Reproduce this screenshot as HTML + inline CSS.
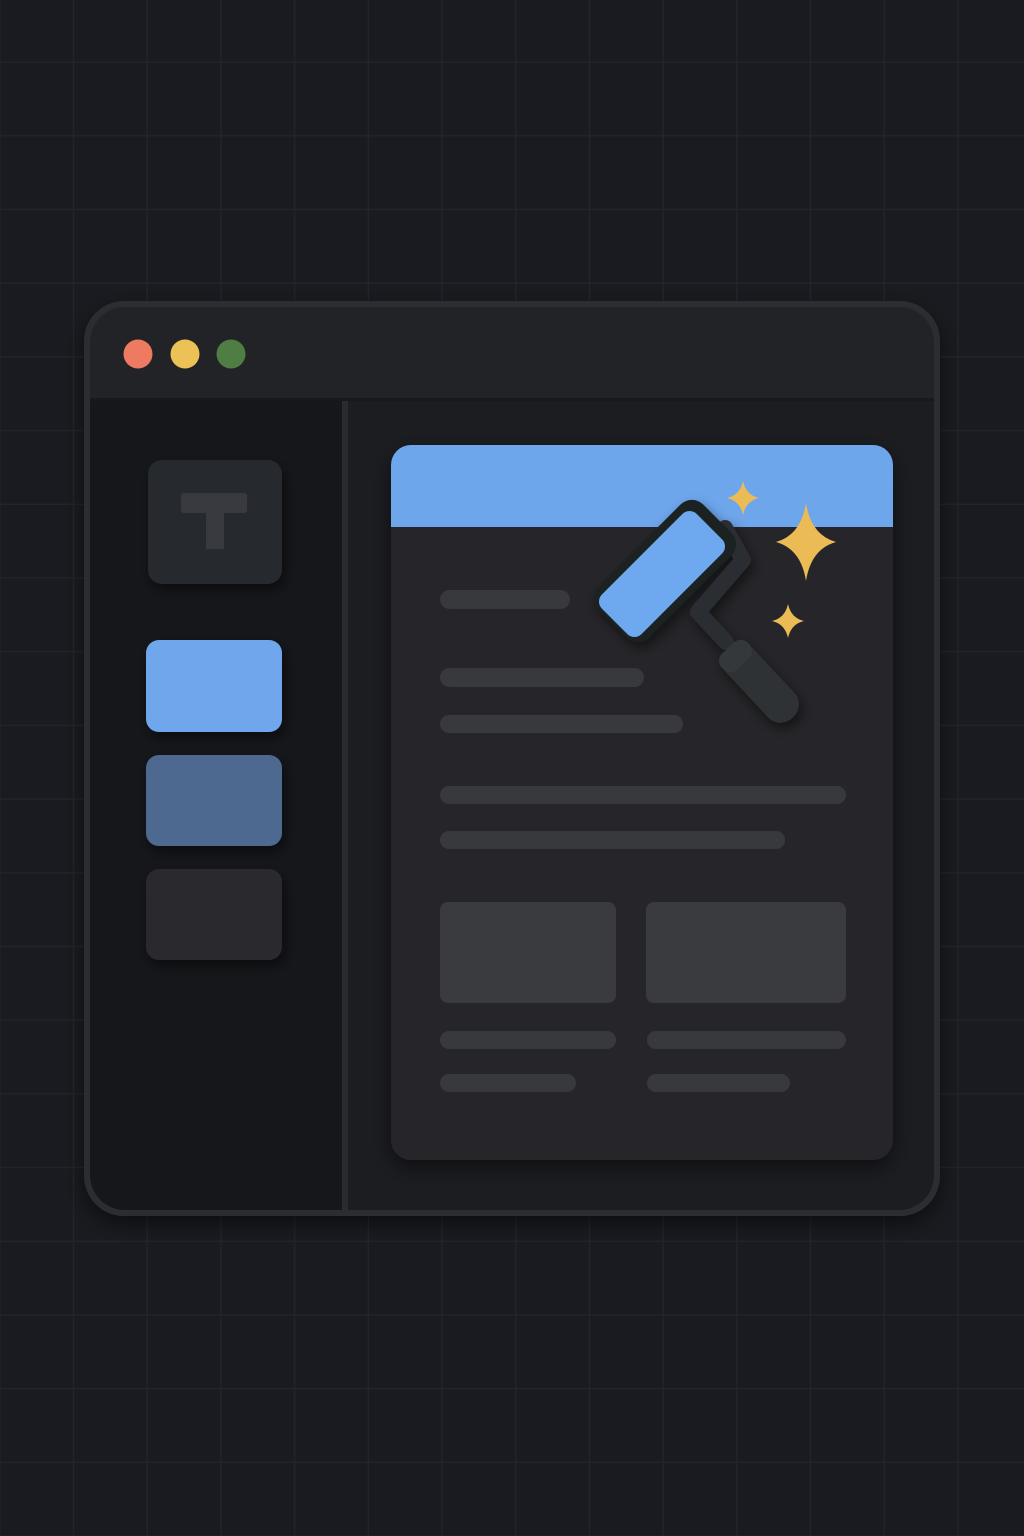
<!DOCTYPE html>
<html><head><meta charset="utf-8"><style>html,body{margin:0;padding:0;background:#1a1b20;}svg{display:block}</style></head>
<body>
<svg width="1024" height="1536" viewBox="0 0 1024 1536" xmlns="http://www.w3.org/2000/svg">
<defs>
<pattern id="g" x="0.5" y="-11" width="73.7" height="73.7" patternUnits="userSpaceOnUse">
<path d="M73.7 0V73.7M0 73.7H73.7" stroke="#24252b" stroke-width="2.5" fill="none"/>
</pattern>
<filter id="sh" x="-20%" y="-20%" width="140%" height="140%"><feDropShadow dx="0" dy="8" stdDeviation="10" flood-color="#000" flood-opacity="0.5"/></filter>
<filter id="sh2" x="-30%" y="-30%" width="160%" height="160%"><feDropShadow dx="3" dy="6" stdDeviation="6" flood-color="#000" flood-opacity="0.5"/></filter>
<clipPath id="cc"><rect x="391" y="445" width="502" height="715" rx="20"/></clipPath>
</defs>
<rect width="1024" height="1536" fill="#1a1b20"/>
<rect width="1024" height="1536" fill="url(#g)"/>
<rect x="84" y="301" width="856" height="915" rx="40" fill="#2c2d31" filter="url(#sh)"/>
<rect x="90" y="307" width="844" height="903" rx="35" fill="#222327"/>
<rect x="90" y="398" width="844" height="3" fill="#18191c"/>
<path d="M90 401H342V1210H125A35 35 0 0 1 90 1175Z" fill="#16171b"/>
<rect x="342" y="401" width="6" height="809" fill="#2a2b2f"/>
<path d="M348 401H934V1175A35 35 0 0 1 899 1210H348Z" fill="#1c1d21"/>
<circle cx="138" cy="354" r="14.5" fill="#ee7a62"/>
<circle cx="185" cy="354" r="14.5" fill="#ecc257"/>
<circle cx="231" cy="354" r="14.5" fill="#4f7e45"/>
<rect x="148" y="460" width="134" height="124" rx="14" fill="#28292d" filter="url(#sh2)"/>
<rect x="181" y="493" width="66" height="20" rx="3" fill="#393a3f"/>
<rect x="206" y="510" width="18" height="39" fill="#393a3f"/>
<rect x="146" y="640" width="136" height="92" rx="13" fill="#6fa7ec" filter="url(#sh2)"/>
<rect x="146" y="755" width="136" height="91" rx="13" fill="#4d6990" filter="url(#sh2)"/>
<rect x="146" y="869" width="136" height="91" rx="13" fill="#29292d" filter="url(#sh2)"/>
<rect x="391" y="445" width="502" height="715" rx="20" fill="#27282c" filter="url(#sh)"/>
<g clip-path="url(#cc)"><rect x="391" y="445" width="502" height="82" fill="#6ea6ec"/></g>
<g fill="#38393d">
<rect x="440" y="590" width="130" height="19" rx="9.5"/>
<rect x="440" y="668" width="204" height="19" rx="9.5"/>
<rect x="440" y="715" width="243" height="18" rx="9"/>
<rect x="440" y="786" width="406" height="18" rx="9"/>
<rect x="440" y="831" width="345" height="18" rx="9"/>
<rect x="440" y="902" width="176" height="101" rx="8" fill="#3a3b3f"/>
<rect x="646" y="902" width="200" height="101" rx="8" fill="#3a3b3f"/>
<rect x="440" y="1031" width="176" height="18" rx="9"/>
<rect x="647" y="1031" width="199" height="18" rx="9"/>
<rect x="440" y="1074" width="136" height="18" rx="9"/>
<rect x="647" y="1074" width="143" height="18" rx="9"/>
</g>
<g filter="url(#sh2)">
<path d="M725 528 L743 560 L698 612 L726 642" fill="none" stroke="#2c2d31" stroke-width="16" stroke-linejoin="round" stroke-linecap="round"/>
<rect x="-18" y="0" width="36" height="95" rx="17" fill="#2f3034" transform="translate(728 648) rotate(-43)"/>
<rect x="-18" y="0" width="36" height="22" rx="10" fill="#36373b" transform="translate(728 648) rotate(-43)"/>
<rect x="-74" y="-36" width="148" height="72" rx="16" fill="#1f2023" transform="translate(665 571) rotate(-45)"/>
<rect x="-67" y="-28" width="134" height="56" rx="10" fill="#6ea8ee" transform="translate(662 574) rotate(-45)"/>
</g>
<g fill="#ebbb55">
<path d="M806 503 Q811 535 836 542 Q811 549 806 581 Q801 549 776 542 Q801 535 806 503Z"/>
<path d="M743 481 Q746 495 759 498 Q746 501 743 515 Q740 501 727 498 Q740 495 743 481Z"/>
<path d="M788 604 Q791 618 804 621 Q791 624 788 638 Q785 624 772 621 Q785 618 788 604Z"/>
</g>
</svg>
</body></html>
